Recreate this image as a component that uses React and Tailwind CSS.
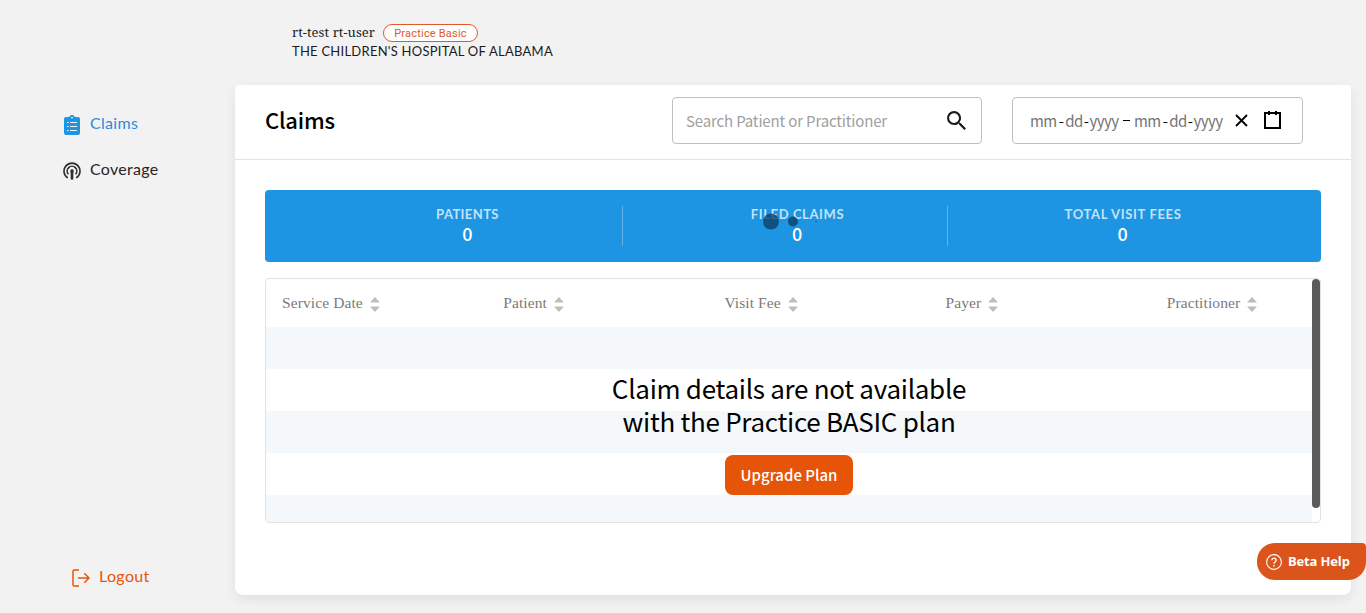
import React from "react";

const SortIcon = () => (
  <svg width="10" height="15" viewBox="0 0 10 15" fill="#bdbdbd" className="mt-[3px] ml-[7px]">
    <path d="M5 0 10 5.5H0zM0 9.5H10L5 15z" />
  </svg>
);

const HeadCell = ({ label }) => (
  <div className="flex w-[221.2px] shrink-0 items-center pl-4 text-[15.5px] tracking-[0.1px] whitespace-nowrap text-[#7a7a7a]">
    <span>{label}</span>
    <SortIcon />
  </div>
);

const Stat = ({ label, value, className }) => (
  <div className={`flex h-10 flex-col items-center ${className}`}>
    <div className="h-4 font-['Lato',sans-serif] text-[13px] leading-[17px] font-bold whitespace-nowrap text-[#c3e2f8]">{label}</div>
    <div className="font-['Noto_Sans_CJK_JP',sans-serif] text-[18px] leading-[22px] font-medium text-white">{value}</div>
  </div>
);

const DateField = () => (
  <span className="w-[89px] tracking-[-0.55px]">
    mm<i className="pr-[2px] pl-[2px] text-black not-italic">-</i>dd<i className="px-[1px] text-black not-italic">-</i>yyyy
  </span>
);

function Sidebar() {
  return (
    <nav className="flex w-[235px] shrink-0 flex-col font-['Lato',sans-serif] text-[16px] leading-5">
      <a className="mt-[28px] ml-[64px] flex h-5 items-center text-[#2b8bdf]">
        <svg width="16" height="20" viewBox="0 0 16 20" className="mt-1">
          <path d="M2 2H5.3A2.8 2.8 0 0 1 10.7 2H14Q16 2 16 4V18Q16 20 14 20H2Q0 20 0 18V4Q0 2 2 2z" fill="#1e95e3" />
          <circle cx="8" cy="2.6" r="0.9" fill="#f2f2f2" />
          <path d="M3 7.5H4.5M6 7.5H13M3 11.5H4.5M6 11.5H13M3 15.5H4.5M6 15.5H13" stroke="#f2f2f2" strokeWidth="1" />
        </svg>
        <span className="ml-[10px] tracking-[0.3px]">Claims</span>
      </a>
      <a className="mt-[26px] ml-[63px] flex h-5 items-center text-[#262626]">
        <svg width="18" height="18" viewBox="0 0 18 18" fill="none" stroke="#2d2d2d" strokeWidth="1.6" className="mt-1">
          <path d="M4.8 15.9A8 8 0 1 1 13.2 15.9" />
          <path d="M5.4 12.2A4.8 4.8 0 1 1 12.6 12.2" />
          <circle cx="9" cy="9" r="1.8" fill="#2d2d2d" stroke="none" />
          <path d="M9 10V17.6" strokeWidth="2.6" />
        </svg>
        <span className="ml-[9px] tracking-[0.3px]">Coverage</span>
      </a>
      <a className="mt-auto mb-[27px] ml-[72px] flex h-5 items-center text-[#e65507]">
        <svg width="18" height="18" viewBox="0 0 18 18" fill="none" stroke="#e65507" strokeWidth="1.5" className="mt-1">
          <path d="M7 1H2.2Q1 1 1 2.2V15.8Q1 17 2.2 17H7M6 9H17M12.3 4.3 17 9 12.3 13.7" />
        </svg>
        <span className="ml-[9px] tracking-[0.35px]">Logout</span>
      </a>
    </nav>
  );
}

export default function App() {
  return (
    <div className="relative flex h-[613px] w-[1366px] flex-col overflow-hidden bg-[#f2f2f2] text-black">
      <header className="flex h-[85px] shrink-0 flex-col pt-6 pl-[292px] text-[#1b1b1b]">
        <div className="flex h-[18px] items-center">
          <span className="w-[83px] font-['Noto_Serif','Liberation_Serif',serif] text-[13px] tracking-[0.07px] whitespace-nowrap">rt-test rt-user</span>
          <span className="ml-2 flex h-[18px] w-[95px] items-center justify-center rounded-full border border-[#e2572b] bg-white pt-[2px] font-['Roboto',sans-serif] text-[11px] tracking-[0.2px] text-[#e2572b]">Practice Basic</span>
        </div>
        <div className="font-['Lato',sans-serif] text-[13px] leading-[18px] tracking-[0.25px]">THE CHILDREN'S HOSPITAL OF ALABAMA</div>
      </header>

      <div className="flex min-h-0 flex-1">
        <Sidebar />
        <main className="h-[510px] w-[1116px] rounded-t rounded-b-lg bg-white shadow-[0_4px_12px_rgba(0,0,0,0.08)]">
          <div className="flex h-[75px] items-start border-b border-[#e2e2e2] pt-3 pl-[30px]">
            <h1 className="w-[407px] pt-[5px] font-['Noto_Sans_CJK_JP',sans-serif] text-[22px] leading-[34px] font-medium tracking-[-0.2px]">Claims</h1>
            <div className="flex h-[47px] w-[310px] items-center rounded border border-[#bfbfbf] pr-[15px] pl-[13px] font-['Noto_Sans_CJK_JP',sans-serif]">
              <span className="flex-1 pt-[2px] text-[15px] tracking-[-0.15px] text-[#a0a0a0]">Search Patient or Practitioner</span>
              <svg width="19" height="19" viewBox="3 3 17.49 17.49" fill="#1c1c1c">
                <path d="M15.5 14h-.79l-.28-.27A6.471 6.471 0 0 0 16 9.5 6.5 6.5 0 1 0 9.5 16c1.61 0 3.09-.59 4.23-1.57l.27.28v.79l5 4.99L20.49 19l-4.99-5zm-6 0C7.01 14 5 11.99 5 9.5S7.01 5 9.5 5 14 7.01 14 9.5 11.99 14 9.5 14z" />
              </svg>
            </div>
            <div className="ml-[30px] flex h-[47px] w-[291px] items-center rounded border border-[#bfbfbf] pl-[17px] font-['Noto_Sans_CJK_JP',sans-serif] whitespace-nowrap">
              <div className="flex w-[200px] items-center pt-[2px] text-[15px] text-[#757575]">
                <DateField />
                <span className="mb-[3px] ml-1 h-px w-[7px] bg-black" />
                <span className="ml-1 flex">
                  <DateField />
                </span>
              </div>
              <svg width="13" height="13" viewBox="0 0 13 13" stroke="#000" strokeWidth="1.8" className="ml-[5px]">
                <path d="M1 1 12 12M12 1 1 12" />
              </svg>
              <svg width="17" height="18" viewBox="0 0 17 18" fill="none" stroke="#000" strokeWidth="2" className="mb-[2px] ml-4">
                <path d="M1 2H16V17H1zM5 0V4M12 0V4" />
              </svg>
            </div>
          </div>

          <div className="px-[30px] pt-[30px]">
            <section className="relative flex h-[72px] items-center rounded bg-[#1e95e3] pl-[47px]">
              <Stat label="PATIENTS" value="0" className="w-[311px] border-r border-[#62b5eb] pl-px tracking-[0.4px]" />
              <Stat label="FILED CLAIMS" value="0" className="ml-[24px] w-[301px] border-r border-[#62b5eb] pl-px tracking-[0.6px]" />
              <Stat label="TOTAL VISIT FEES" value="0" className="ml-[24px] w-[302px] tracking-[0.65px]" />
              <svg width="58" height="18" viewBox="0 0 58 18" fill="#0b3f66" fillOpacity=".78" className="absolute top-[23px] left-[498px]">
                <circle cx="8" cy="8.5" r="8" />
                <circle cx="30" cy="8.5" r="5" />
                <circle cx="53" cy="8.5" r="0.7" />
              </svg>
            </section>

            <section className="relative mt-4 flex h-[245px] overflow-hidden rounded border border-[#e2e2e2]">
              <div className="flex w-[1046px] flex-col">
                <div className="flex h-12 shrink-0 font-['Liberation_Serif',serif]">
                  <HeadCell label="Service Date" />
                  <HeadCell label="Patient" />
                  <HeadCell label="Visit Fee" />
                  <HeadCell label="Payer" />
                  <HeadCell label="Practitioner" />
                </div>
                <div className="h-[42px] shrink-0 bg-[#f4f8fb]" />
                <div className="h-[42px] shrink-0" />
                <div className="h-[42px] shrink-0 bg-[#f4f8fb]" />
                <div className="h-[42px] shrink-0" />
                <div className="h-[27px] shrink-0 bg-[#f4f8fb]" />
              </div>
              <div className="h-[229px] w-2 rounded-full bg-[#5a5a5a]" />
              <div className="absolute top-[92px] left-0 flex w-[1046px] flex-col items-center font-['Noto_Sans_CJK_JP',sans-serif]">
                <p className="text-center text-[26px] leading-[33px] tracking-[-0.28px]">Claim details are not available<br />with the Practice BASIC plan</p>
                <button className="mt-[18px] h-10 w-32 rounded-lg bg-[#e65507] text-[15px] font-medium text-white">Upgrade Plan</button>
              </div>
            </section>
          </div>
        </main>
      </div>

      <button className="absolute top-[543px] right-0 flex h-[37px] w-[109px] items-center rounded-[18px] rounded-tr-[4px] bg-[#db541b] pl-[9px] text-white">
        <svg width="16" height="16" viewBox="0 0 16 16" fill="none" stroke="#fff" strokeWidth="1.1">
          <circle cx="8" cy="8" r="7.4" />
          <path d="M5.9 6.3A2.1 2.1 0 1 1 8.9 8.1Q8 8.6 8 9.7M8 11V12.4" strokeWidth="1.4" />
        </svg>
        <span className="ml-[6px] font-['Open_Sans',sans-serif] text-[13px] font-bold tracking-[-0.15px] whitespace-nowrap">Beta Help</span>
      </button>
    </div>
  );
}
